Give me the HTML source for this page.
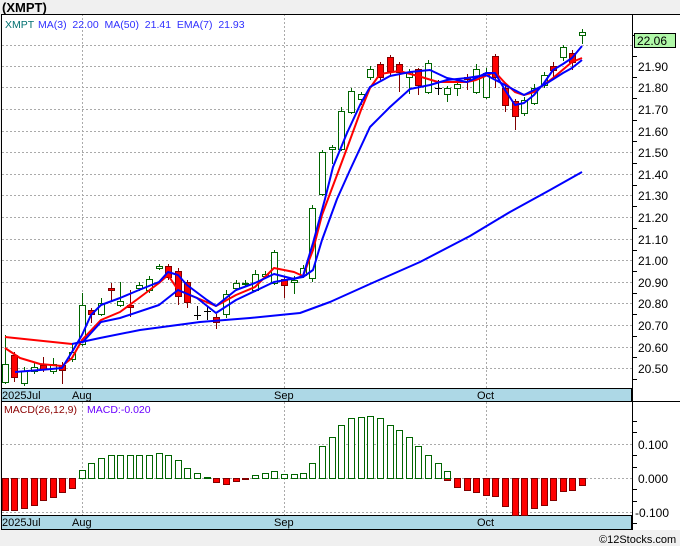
<!DOCTYPE html>
<html><head><meta charset="utf-8"><style>
html,body{margin:0;padding:0;background:#f0f0f0;}
svg{display:block;font-family:"Liberation Sans","DejaVu Sans",sans-serif;}
</style></head><body>
<svg width="680" height="546" viewBox="0 0 680 546" xmlns="http://www.w3.org/2000/svg">
<rect x="0" y="0" width="680" height="546" fill="#f0f0f0"/>
<text x="2" y="12" font-size="13" font-weight="bold" fill="#000">(XMPT)</text>
<rect x="1" y="14" width="679" height="516" fill="#fff"/>
<g stroke="#aaa" stroke-dasharray="2,2" stroke-width="1">
<line x1="82.5" y1="14" x2="82.5" y2="515"/><line x1="284.5" y1="14" x2="284.5" y2="515"/><line x1="486.5" y1="14" x2="486.5" y2="515"/>
<line x1="2" y1="45.5" x2="632" y2="45.5"/><line x1="2" y1="66.5" x2="632" y2="66.5"/><line x1="2" y1="87.5" x2="632" y2="87.5"/><line x1="2" y1="109.5" x2="632" y2="109.5"/><line x1="2" y1="131.5" x2="632" y2="131.5"/><line x1="2" y1="152.5" x2="632" y2="152.5"/><line x1="2" y1="174.5" x2="632" y2="174.5"/><line x1="2" y1="195.5" x2="632" y2="195.5"/><line x1="2" y1="217.5" x2="632" y2="217.5"/><line x1="2" y1="239.5" x2="632" y2="239.5"/><line x1="2" y1="260.5" x2="632" y2="260.5"/><line x1="2" y1="282.5" x2="632" y2="282.5"/><line x1="2" y1="303.5" x2="632" y2="303.5"/><line x1="2" y1="325.5" x2="632" y2="325.5"/><line x1="2" y1="347.5" x2="632" y2="347.5"/><line x1="2" y1="368.5" x2="632" y2="368.5"/>
<line x1="2" y1="444.5" x2="632" y2="444.5"/><line x1="2" y1="478.5" x2="632" y2="478.5"/><line x1="2" y1="512.5" x2="632" y2="512.5"/>
</g>
<text x="5" y="28" font-size="10.5" fill="#007070">XMPT</text>
<text x="38" y="28" font-size="10.5" fill="#3030ff" xml:space="preserve">MA(3)  22.00  MA(50)  21.41  EMA(7)  21.93</text>
<g stroke="#006400" stroke-width="1">
<line x1="5.5" y1="335" x2="5.5" y2="384"/><line x1="24.5" y1="367" x2="24.5" y2="386"/><line x1="34.5" y1="363" x2="34.5" y2="374"/><line x1="53.5" y1="358" x2="53.5" y2="374"/><line x1="72.5" y1="343" x2="72.5" y2="362"/><line x1="82.5" y1="293" x2="82.5" y2="346"/><line x1="101.5" y1="298" x2="101.5" y2="316"/><line x1="120.5" y1="282" x2="120.5" y2="307"/><line x1="139.5" y1="282" x2="139.5" y2="291"/><line x1="149.5" y1="276" x2="149.5" y2="293"/><line x1="159.5" y1="264" x2="159.5" y2="270"/><line x1="226.5" y1="290" x2="226.5" y2="318"/><line x1="236.5" y1="280" x2="236.5" y2="291"/><line x1="245.5" y1="280" x2="245.5" y2="287"/><line x1="255.5" y1="270" x2="255.5" y2="292"/><line x1="265.5" y1="271" x2="265.5" y2="279"/><line x1="274.5" y1="250" x2="274.5" y2="285"/><line x1="294.5" y1="276" x2="294.5" y2="294"/><line x1="303.5" y1="265" x2="303.5" y2="278"/><line x1="312.5" y1="205" x2="312.5" y2="282"/><line x1="322.5" y1="150" x2="322.5" y2="196"/><line x1="332.5" y1="145" x2="332.5" y2="164"/><line x1="341.5" y1="107" x2="341.5" y2="151"/><line x1="351.5" y1="88" x2="351.5" y2="114"/><line x1="361.5" y1="92" x2="361.5" y2="105"/><line x1="370.5" y1="66" x2="370.5" y2="80"/><line x1="409.5" y1="69" x2="409.5" y2="94"/><line x1="428.5" y1="60" x2="428.5" y2="94"/><line x1="447.5" y1="86" x2="447.5" y2="102"/><line x1="457.5" y1="80" x2="457.5" y2="96"/><line x1="476.5" y1="64" x2="476.5" y2="94"/><line x1="486.5" y1="68" x2="486.5" y2="99"/><line x1="524.5" y1="97" x2="524.5" y2="116"/><line x1="534.5" y1="84" x2="534.5" y2="105"/><line x1="544.5" y1="72" x2="544.5" y2="88"/><line x1="563.5" y1="45" x2="563.5" y2="61"/><line x1="582.5" y1="29" x2="582.5" y2="44"/>
</g>
<g stroke="#800000" stroke-width="1">
<line x1="14.5" y1="352" x2="14.5" y2="382"/><line x1="43.5" y1="357" x2="43.5" y2="372"/><line x1="62.5" y1="362" x2="62.5" y2="384"/><line x1="91.5" y1="308" x2="91.5" y2="323"/><line x1="111.5" y1="283" x2="111.5" y2="302"/><line x1="130.5" y1="290" x2="130.5" y2="317"/><line x1="168.5" y1="264" x2="168.5" y2="280"/><line x1="178.5" y1="268" x2="178.5" y2="305"/><line x1="187.5" y1="280" x2="187.5" y2="308"/><line x1="216.5" y1="314" x2="216.5" y2="329"/><line x1="284.5" y1="277" x2="284.5" y2="298"/><line x1="380.5" y1="62" x2="380.5" y2="80"/><line x1="390.5" y1="55" x2="390.5" y2="75"/><line x1="399.5" y1="62" x2="399.5" y2="92"/><line x1="418.5" y1="68" x2="418.5" y2="95"/><line x1="467.5" y1="74" x2="467.5" y2="90"/><line x1="495.5" y1="54" x2="495.5" y2="88"/><line x1="505.5" y1="86" x2="505.5" y2="112"/><line x1="515.5" y1="99" x2="515.5" y2="130"/><line x1="553.5" y1="62" x2="553.5" y2="80"/><line x1="572.5" y1="50" x2="572.5" y2="70"/>
</g>
<g stroke="#000" stroke-width="1">
<line x1="194" y1="315.5" x2="201" y2="315.5"/><line x1="197.5" y1="306" x2="197.5" y2="320"/>
<line x1="204" y1="311.5" x2="211" y2="311.5"/><line x1="207.5" y1="306" x2="207.5" y2="320"/>
<line x1="435" y1="88.5" x2="442" y2="88.5"/><line x1="438.5" y1="80" x2="438.5" y2="95"/>
</g>
<g fill="#fff" stroke="#006400" stroke-width="1">
<rect x="2.5" y="364.5" width="6" height="18"/><rect x="21.5" y="371.5" width="6" height="12"/><rect x="31.5" y="367.5" width="6" height="4"/><rect x="50.5" y="364.5" width="6" height="7"/><rect x="69.5" y="352.5" width="6" height="7"/><rect x="79.5" y="305.5" width="6" height="39"/><rect x="98.5" y="303.5" width="6" height="11"/><rect x="117.5" y="301.5" width="6" height="4"/><rect x="136.5" y="285.5" width="6" height="3"/><rect x="146.5" y="279.5" width="6" height="11"/><rect x="156.5" y="266.5" width="6" height="2"/><rect x="223.5" y="294.5" width="6" height="20"/><rect x="233.5" y="283.5" width="6" height="5"/><rect x="242.5" y="283.5" width="6" height="1"/><rect x="252.5" y="274.5" width="6" height="16"/><rect x="262.5" y="274.5" width="6" height="2"/><rect x="271.5" y="252.5" width="6" height="31"/><rect x="291.5" y="280.5" width="6" height="2"/><rect x="300.5" y="268.5" width="6" height="7"/><rect x="309.5" y="208.5" width="6" height="70"/><rect x="319.5" y="152.5" width="6" height="42"/><rect x="329.5" y="147.5" width="6" height="2"/><rect x="338.5" y="111.5" width="6" height="38"/><rect x="348.5" y="91.5" width="6" height="21"/><rect x="358.5" y="94.5" width="6" height="5"/><rect x="367.5" y="69.5" width="6" height="8"/><rect x="406.5" y="72.5" width="6" height="5"/><rect x="425.5" y="63.5" width="6" height="29"/><rect x="444.5" y="88.5" width="6" height="6"/><rect x="454.5" y="84.5" width="6" height="4"/><rect x="473.5" y="69.5" width="6" height="23"/><rect x="483.5" y="73.5" width="6" height="24"/><rect x="521.5" y="100.5" width="6" height="13"/><rect x="531.5" y="88.5" width="6" height="15"/><rect x="541.5" y="75.5" width="6" height="10"/><rect x="560.5" y="47.5" width="6" height="10"/><rect x="579.5" y="32.5" width="6" height="3"/>
</g>
<g fill="#f00" stroke="#800000" stroke-width="1">
<rect x="11.5" y="355.5" width="6" height="22"/><rect x="40.5" y="365.5" width="6" height="4"/><rect x="59.5" y="365.5" width="6" height="5"/><rect x="88.5" y="310.5" width="6" height="4"/><rect x="108.5" y="288.5" width="6" height="2"/><rect x="127.5" y="305.5" width="6" height="2"/><rect x="165.5" y="266.5" width="6" height="11"/><rect x="175.5" y="271.5" width="6" height="25"/><rect x="184.5" y="282.5" width="6" height="20"/><rect x="213.5" y="317.5" width="6" height="5"/><rect x="281.5" y="279.5" width="6" height="6"/><rect x="377.5" y="64.5" width="6" height="13"/><rect x="387.5" y="57.5" width="6" height="14"/><rect x="396.5" y="64.5" width="6" height="8"/><rect x="415.5" y="69.5" width="6" height="16"/><rect x="464.5" y="77.5" width="6" height="2"/><rect x="492.5" y="56.5" width="6" height="21"/><rect x="502.5" y="88.5" width="6" height="17"/><rect x="512.5" y="101.5" width="6" height="15"/><rect x="550.5" y="66.5" width="6" height="4"/><rect x="569.5" y="53.5" width="6" height="9"/>
</g>
<g fill="none" stroke-width="2" stroke-linejoin="round">
<polyline stroke="#f00" points="5,348 20,358 40,364 62,366 72,358 82,340 101,320 120,312 139,298 159,283 168,275 178,290 197,298 216,306 236,295 255,287 274,268 294,272 303,276 313,250 322,215 337,175 350,140 361,110 370,88 380,74 399,71 418,76 438,82 467,82 476,80 495,72 505,83 515,92 524,95 534,92 553,78 572,62 582,58"/>
<polyline stroke="#f00" points="5,337 72,344"/>
<polyline stroke="#0000ff" points="72,344 100,338 140,330 200,322 250,318 300,313 330,302 370,284 420,262 470,236 510,212 550,190 582,172"/>
<polyline stroke="#0000ff" points="15,372 40,370 62,368 72,352 82,335 91,315 101,305 120,298 139,290 159,282 168,272 178,275 187,285 207,300 216,306 236,290 255,283 274,274 294,279 303,276 313,243 325,199 333,167 347,133 360,105 370,87 390,76 410,72 430,70 447,78 467,82 476,78 486,73 495,73 505,90 515,105 524,103 534,95 544,83 553,70 563,64 572,58 582,46"/>
<polyline stroke="#0000ff" points="82,343 101,322 120,318 159,305 178,290 197,298 216,313 236,300 274,282 303,277 313,270 322,240 337,199 350,170 370,127 390,107 410,89 430,85 447,80 467,78 486,75 505,85 524,95 544,85 563,73 572,68 582,60"/>
</g>
<rect x="1.5" y="388.5" width="630" height="13" fill="#add8e6" stroke="#000"/>
<rect x="1.5" y="515.5" width="630" height="14" fill="#add8e6" stroke="#000"/>
<g font-size="11" fill="#000">
<text x="2" y="399">2025Jul</text><text x="72" y="399">Aug</text><text x="274" y="399">Sep</text><text x="477" y="399">Oct</text>
<text x="2" y="526">2025Jul</text><text x="72" y="526">Aug</text><text x="274" y="526">Sep</text><text x="477" y="526">Oct</text>
</g>
<text x="4" y="413" font-size="10.5" fill="#8b0000">MACD(26,12,9)</text>
<text x="87" y="413" font-size="10.5" fill="#6a00ff">MACD:-0.020</text>
<g fill="#f00" stroke="#800000">
<rect x="2.5" y="478.5" width="6" height="32"/><rect x="11.5" y="478.5" width="6" height="32"/><rect x="21.5" y="478.5" width="6" height="30"/><rect x="31.5" y="478.5" width="6" height="27"/><rect x="40.5" y="478.5" width="6" height="22"/><rect x="50.5" y="478.5" width="6" height="19"/><rect x="59.5" y="478.5" width="6" height="14"/><rect x="69.5" y="478.5" width="6" height="10"/>
<rect x="213.5" y="478.5" width="6" height="4"/><rect x="223.5" y="478.5" width="6" height="6"/><rect x="233.5" y="478.5" width="6" height="3"/><rect x="242.5" y="478.5" width="6" height="1"/>
<rect x="444.5" y="478.5" width="6" height="2"/><rect x="454.5" y="478.5" width="6" height="9"/><rect x="464.5" y="478.5" width="6" height="12"/><rect x="473.5" y="478.5" width="6" height="14"/><rect x="483.5" y="478.5" width="6" height="17"/><rect x="492.5" y="478.5" width="6" height="18"/><rect x="502.5" y="478.5" width="6" height="28"/><rect x="512.5" y="478.5" width="6" height="37"/><rect x="521.5" y="478.5" width="6" height="37"/><rect x="531.5" y="478.5" width="6" height="30"/><rect x="541.5" y="478.5" width="6" height="27"/><rect x="550.5" y="478.5" width="6" height="22"/><rect x="560.5" y="478.5" width="6" height="13"/><rect x="569.5" y="478.5" width="6" height="12"/><rect x="579.5" y="478.5" width="6" height="7"/>
</g>
<g fill="#fff" stroke="#006400">
<rect x="79.5" y="470.5" width="6" height="8"/><rect x="88.5" y="463.5" width="6" height="15"/><rect x="98.5" y="458.5" width="6" height="20"/><rect x="108.5" y="455.5" width="6" height="23"/><rect x="117.5" y="455.5" width="6" height="23"/><rect x="127.5" y="455.5" width="6" height="23"/><rect x="136.5" y="455.5" width="6" height="23"/><rect x="146.5" y="455.5" width="6" height="23"/><rect x="156.5" y="453.5" width="6" height="25"/><rect x="165.5" y="455.5" width="6" height="23"/><rect x="175.5" y="460.5" width="6" height="18"/><rect x="184.5" y="468.5" width="6" height="10"/><rect x="194.5" y="473.5" width="6" height="5"/><rect x="204.5" y="477.5" width="6" height="1"/>
<rect x="252.5" y="475.5" width="6" height="3"/><rect x="262.5" y="473.5" width="6" height="5"/><rect x="271.5" y="471.5" width="6" height="7"/><rect x="281.5" y="474.5" width="6" height="4"/><rect x="291.5" y="474.5" width="6" height="4"/><rect x="300.5" y="473.5" width="6" height="5"/><rect x="309.5" y="463.5" width="6" height="15"/><rect x="319.5" y="446.5" width="6" height="32"/><rect x="329.5" y="437.5" width="6" height="41"/><rect x="338.5" y="425.5" width="6" height="53"/><rect x="348.5" y="418.5" width="6" height="60"/><rect x="358.5" y="417.5" width="6" height="61"/><rect x="367.5" y="416.5" width="6" height="62"/><rect x="377.5" y="418.5" width="6" height="60"/><rect x="387.5" y="425.5" width="6" height="53"/><rect x="396.5" y="430.5" width="6" height="48"/><rect x="406.5" y="437.5" width="6" height="41"/><rect x="415.5" y="446.5" width="6" height="32"/><rect x="425.5" y="455.5" width="6" height="23"/><rect x="435.5" y="463.5" width="6" height="15"/><rect x="444.5" y="471.5" width="6" height="7"/>
</g>
<g stroke="#000" stroke-width="1" fill="none">
<line x1="1" y1="14.5" x2="680" y2="14.5"/><line x1="1.5" y1="14" x2="1.5" y2="530"/><line x1="632.5" y1="14" x2="632.5" y2="530"/><line x1="632" y1="401.5" x2="680" y2="401.5"/>
</g>
<g stroke="#000">
<line x1="632" y1="35.5" x2="637" y2="35.5"/><line x1="632" y1="56.5" x2="637" y2="56.5"/><line x1="632" y1="77.5" x2="637" y2="77.5"/><line x1="632" y1="98.5" x2="637" y2="98.5"/><line x1="632" y1="120.5" x2="637" y2="120.5"/><line x1="632" y1="141.5" x2="637" y2="141.5"/><line x1="632" y1="163.5" x2="637" y2="163.5"/><line x1="632" y1="185.5" x2="637" y2="185.5"/><line x1="632" y1="206.5" x2="637" y2="206.5"/><line x1="632" y1="228.5" x2="637" y2="228.5"/><line x1="632" y1="250.5" x2="637" y2="250.5"/><line x1="632" y1="271.5" x2="637" y2="271.5"/><line x1="632" y1="293.5" x2="637" y2="293.5"/><line x1="632" y1="314.5" x2="637" y2="314.5"/><line x1="632" y1="336.5" x2="637" y2="336.5"/><line x1="632" y1="357.5" x2="637" y2="357.5"/><line x1="632" y1="379.5" x2="637" y2="379.5"/>
<line x1="632" y1="421.5" x2="637" y2="421.5"/><line x1="632" y1="432.5" x2="637" y2="432.5"/><line x1="632" y1="455.5" x2="637" y2="455.5"/><line x1="632" y1="467.5" x2="637" y2="467.5"/><line x1="632" y1="489.5" x2="637" y2="489.5"/><line x1="632" y1="501.5" x2="637" y2="501.5"/><line x1="632" y1="523.5" x2="637" y2="523.5"/>
</g>
<g font-size="12" fill="#000">
<text x="638" y="71">21.90</text><text x="638" y="92">21.80</text><text x="638" y="114">21.70</text><text x="638" y="136">21.60</text><text x="638" y="157">21.50</text><text x="638" y="179">21.40</text><text x="638" y="200">21.30</text><text x="638" y="222">21.20</text><text x="638" y="244">21.10</text><text x="638" y="265">21.00</text><text x="638" y="287">20.90</text><text x="638" y="308">20.80</text><text x="638" y="330">20.70</text><text x="638" y="352">20.60</text><text x="638" y="373">20.50</text>
<text x="638" y="449">0.100</text><text x="638" y="483">0.000</text><text x="635" y="517">-0.100</text>
</g>
<rect x="634.5" y="33.5" width="41" height="14" fill="#b0f8a8" stroke="#000"/>
<text x="637" y="45" font-size="12" fill="#000">22.06</text>
<text x="599" y="543" font-size="11" fill="#000">©12Stocks.com</text>
</svg>
</body></html>
